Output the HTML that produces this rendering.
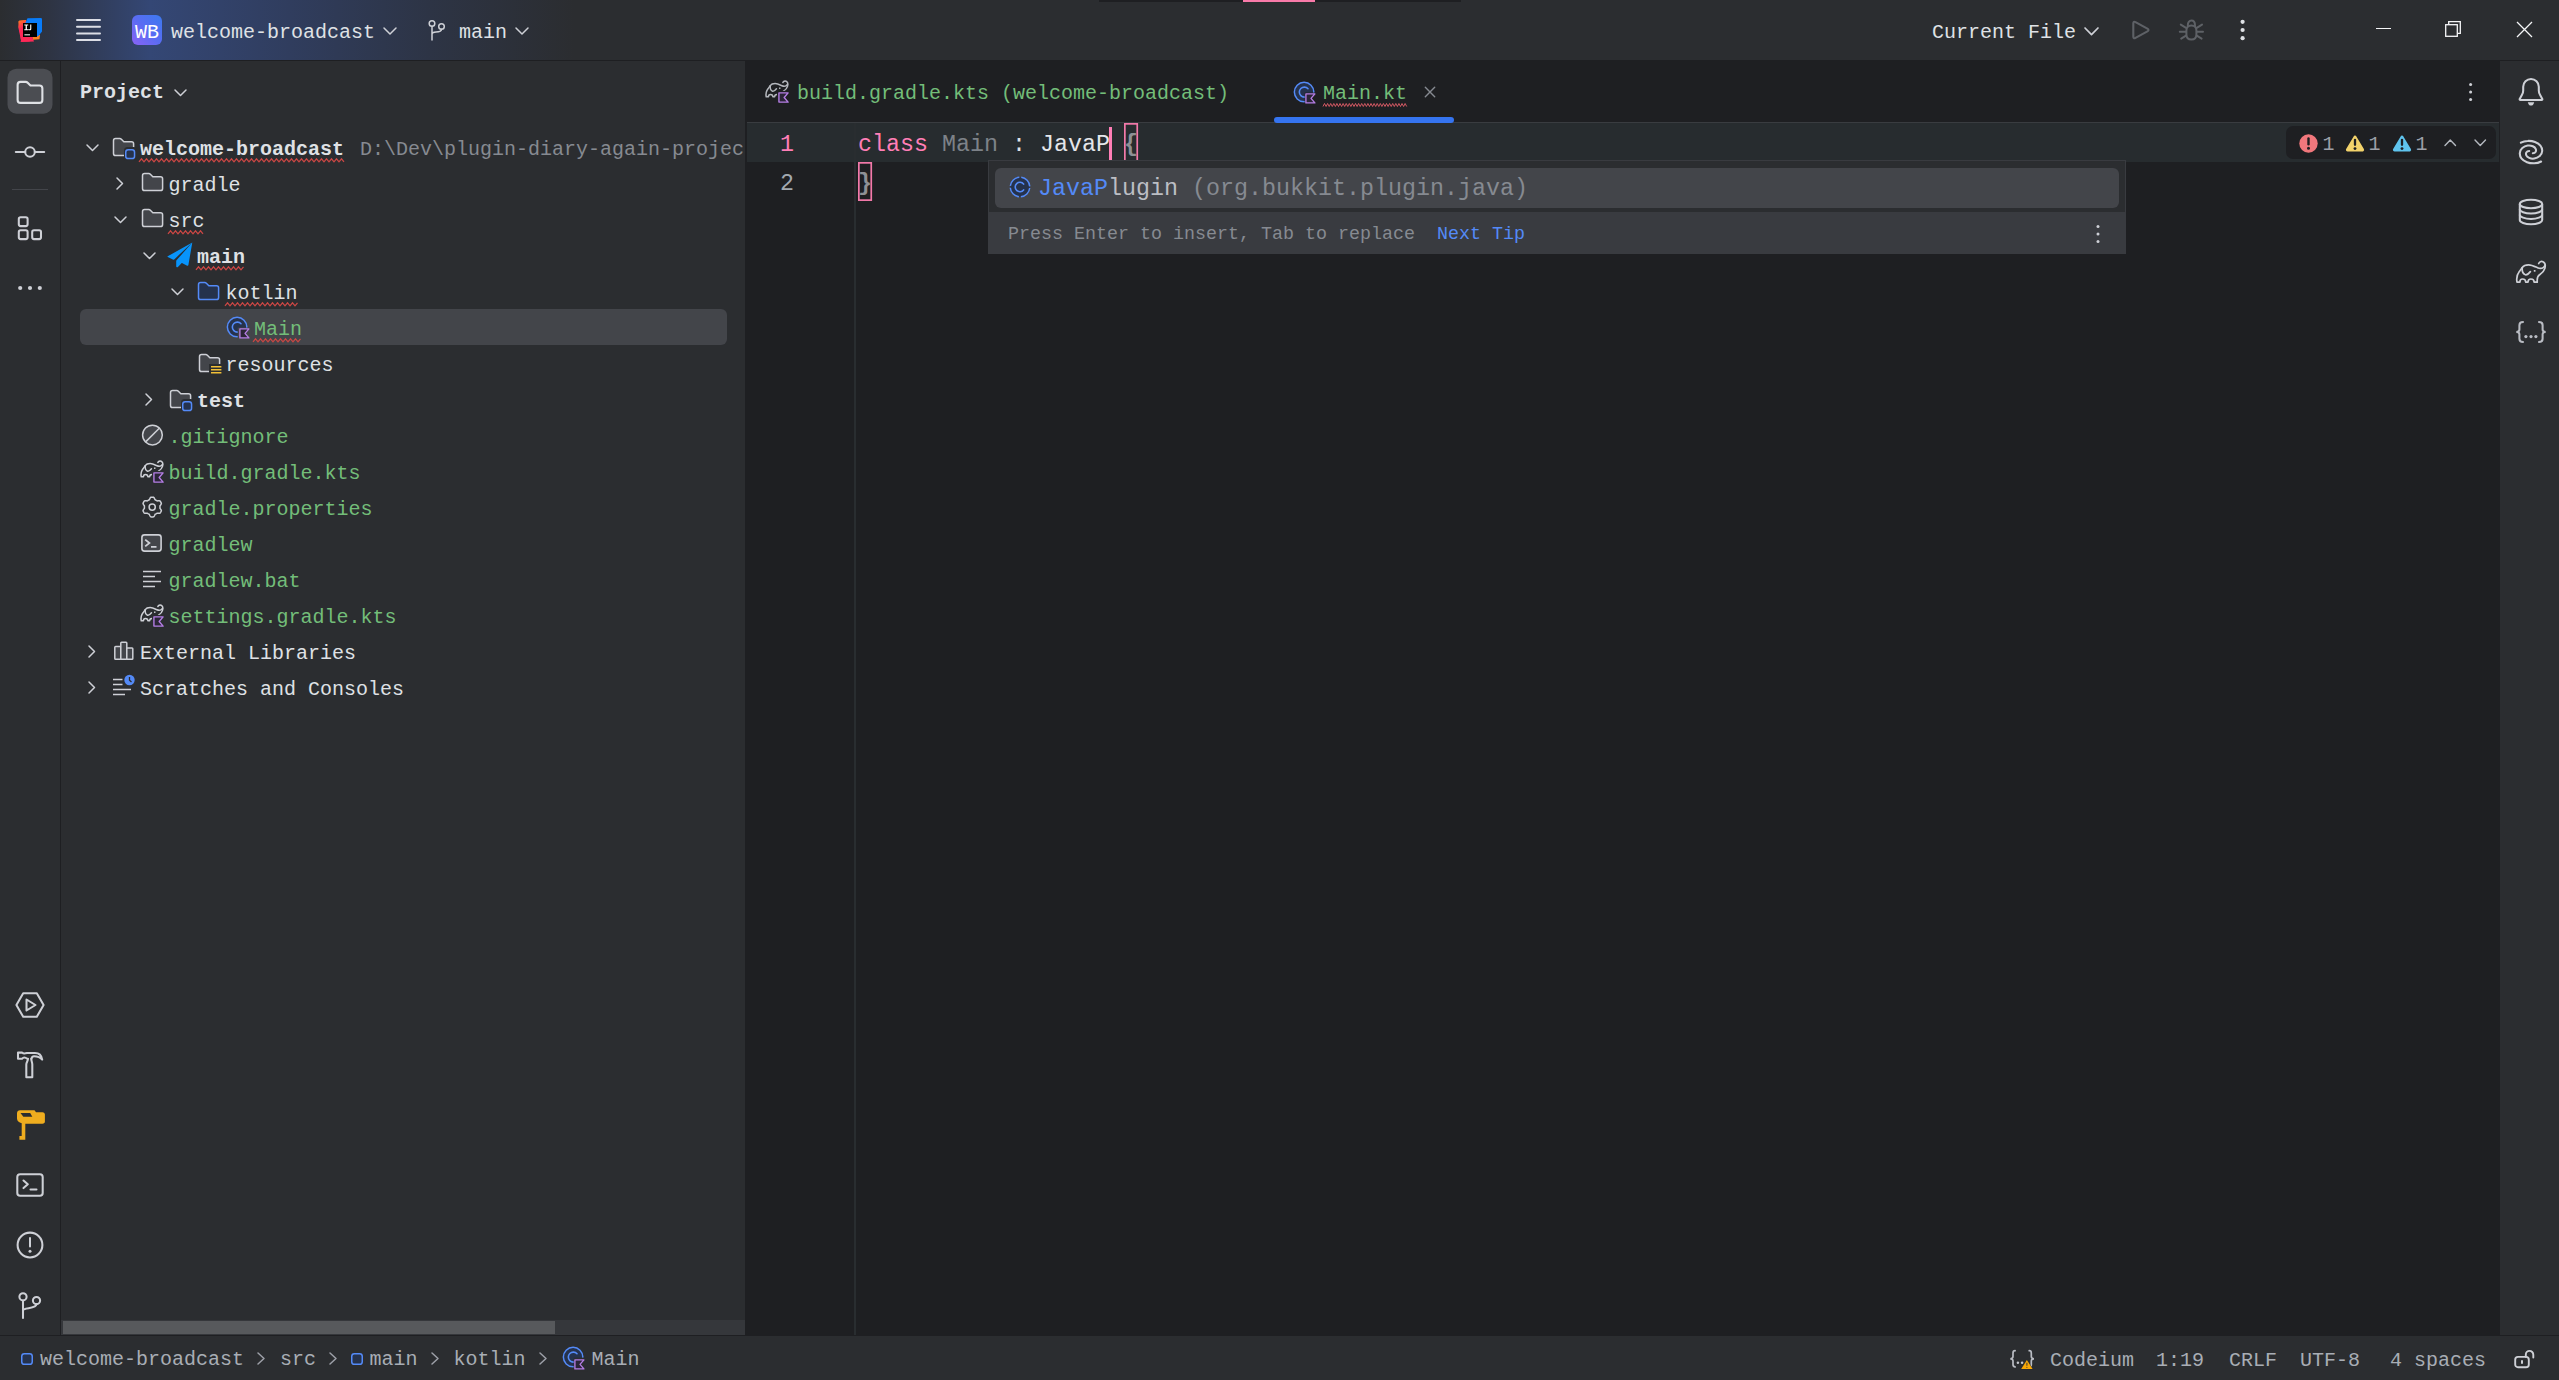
<!DOCTYPE html>
<html><head><meta charset="utf-8"><title>welcome-broadcast – Main.kt</title>
<style>
html,body{margin:0;padding:0;background:#1e1f22;}
body{width:2559px;height:1380px;position:relative;overflow:hidden;font-family:"Liberation Mono",monospace;}
.t{position:absolute;white-space:pre;font-family:"Liberation Mono",monospace;}
.i{position:absolute;overflow:visible;}
.b{position:absolute;}
</style></head><body>
<div class="b" style="left:0;top:0;width:2559px;height:60px;background:#2b2d30"></div>
<div class="b" style="left:0;top:0;width:600px;height:60px;background:linear-gradient(to right,#2b2d30 0px,#2e3443 50px,#344775 150px,#303d5e 290px,#2d3445 430px,#2b2d30 575px)"></div>
<div class="b" style="left:0;top:60px;width:2559px;height:1px;background:#1e1f22"></div>
<div class="b" style="left:0;top:61px;width:60px;height:1274px;background:#2b2d30"></div>
<div class="b" style="left:60px;top:61px;width:1px;height:1274px;background:#1e1f22"></div>
<div class="b" style="left:61px;top:61px;width:684px;height:1274px;background:#2b2d30"></div>
<div class="b" style="left:2500px;top:61px;width:59px;height:1274px;background:#2b2d30"></div>
<div class="b" style="left:0;top:1336px;width:2559px;height:44px;background:#2b2d30"></div>
<div class="b" style="left:80px;top:309px;width:647px;height:36px;border-radius:6px;background:#43454a"></div>
<div class="t " style="left:80px;top:77.66px;font-size:20px;line-height:30px;color:#dfe1e5;font-weight:bold;">Project</div>
<svg class="i" style="left:173.5px;top:89.25px;" width="13" height="7.5" viewBox="0 0 13 7.5"><polyline points="1,1 6.5,6.5 12,1" fill="none" stroke="#ced0d6" stroke-width="1.5" stroke-linecap="round" stroke-linejoin="round"/></svg>
<div class="t " style="left:140px;top:134.66px;font-size:20px;line-height:30px;color:#dfe1e5;font-weight:bold;">welcome-broadcast</div>
<svg class="i" style="left:85.5px;top:143.75px;" width="13" height="7.5" viewBox="0 0 13 7.5"><polyline points="1,1 6.5,6.5 12,1" fill="none" stroke="#ced0d6" stroke-width="1.5" stroke-linecap="round" stroke-linejoin="round"/></svg>
<svg class="i" style="left:139px;top:158px" width="205" height="5" viewBox="0 0 205 5"><polyline points="0.0,3.8 2.5,0.8 5.0,3.8 7.5,0.8 10.0,3.8 12.5,0.8 15.0,3.8 17.5,0.8 20.0,3.8 22.5,0.8 25.0,3.8 27.5,0.8 30.0,3.8 32.5,0.8 35.0,3.8 37.5,0.8 40.0,3.8 42.5,0.8 45.0,3.8 47.5,0.8 50.0,3.8 52.5,0.8 55.0,3.8 57.5,0.8 60.0,3.8 62.5,0.8 65.0,3.8 67.5,0.8 70.0,3.8 72.5,0.8 75.0,3.8 77.5,0.8 80.0,3.8 82.5,0.8 85.0,3.8 87.5,0.8 90.0,3.8 92.5,0.8 95.0,3.8 97.5,0.8 100.0,3.8 102.5,0.8 105.0,3.8 107.5,0.8 110.0,3.8 112.5,0.8 115.0,3.8 117.5,0.8 120.0,3.8 122.5,0.8 125.0,3.8 127.5,0.8 130.0,3.8 132.5,0.8 135.0,3.8 137.5,0.8 140.0,3.8 142.5,0.8 145.0,3.8 147.5,0.8 150.0,3.8 152.5,0.8 155.0,3.8 157.5,0.8 160.0,3.8 162.5,0.8 165.0,3.8 167.5,0.8 170.0,3.8 172.5,0.8 175.0,3.8 177.5,0.8 180.0,3.8 182.5,0.8 185.0,3.8 187.5,0.8 190.0,3.8 192.5,0.8 195.0,3.8 197.5,0.8 200.0,3.8 202.5,0.8 205.0,3.8" fill="none" stroke="#cb4744" stroke-width="1.25" stroke-linejoin="miter"/></svg>
<div class="b" style="left:360px;top:129px;width:385px;height:36px;overflow:hidden"><div class="t" style="left:0;top:5.66px;font-size:20px;line-height:30px;color:#868a91">D:\Dev\plugin-diary-again-project</div></div>
<div class="t " style="left:168.5px;top:170.66px;font-size:20px;line-height:30px;color:#dfe1e5;">gradle</div>
<svg class="i" style="left:116.25px;top:176.5px;" width="7.5" height="13" viewBox="0 0 7.5 13"><polyline points="1,1 6.5,6.5 1,12" fill="none" stroke="#ced0d6" stroke-width="1.5" stroke-linecap="round" stroke-linejoin="round"/></svg>
<div class="t " style="left:168.5px;top:206.66px;font-size:20px;line-height:30px;color:#dfe1e5;">src</div>
<svg class="i" style="left:114.0px;top:215.75px;" width="13" height="7.5" viewBox="0 0 13 7.5"><polyline points="1,1 6.5,6.5 12,1" fill="none" stroke="#ced0d6" stroke-width="1.5" stroke-linecap="round" stroke-linejoin="round"/></svg>
<svg class="i" style="left:167.5px;top:230px" width="37.0" height="5" viewBox="0 0 37.0 5"><polyline points="0.0,3.8 2.5,0.8 5.0,3.8 7.5,0.8 10.0,3.8 12.5,0.8 15.0,3.8 17.5,0.8 20.0,3.8 22.5,0.8 25.0,3.8 27.5,0.8 30.0,3.8 32.5,0.8 35.0,3.8" fill="none" stroke="#cb4744" stroke-width="1.25" stroke-linejoin="miter"/></svg>
<div class="t " style="left:197px;top:242.66px;font-size:20px;line-height:30px;color:#dfe1e5;font-weight:bold;">main</div>
<svg class="i" style="left:142.5px;top:251.75px;" width="13" height="7.5" viewBox="0 0 13 7.5"><polyline points="1,1 6.5,6.5 12,1" fill="none" stroke="#ced0d6" stroke-width="1.5" stroke-linecap="round" stroke-linejoin="round"/></svg>
<svg class="i" style="left:196px;top:266px" width="49" height="5" viewBox="0 0 49 5"><polyline points="0.0,3.8 2.5,0.8 5.0,3.8 7.5,0.8 10.0,3.8 12.5,0.8 15.0,3.8 17.5,0.8 20.0,3.8 22.5,0.8 25.0,3.8 27.5,0.8 30.0,3.8 32.5,0.8 35.0,3.8 37.5,0.8 40.0,3.8 42.5,0.8 45.0,3.8 47.5,0.8" fill="none" stroke="#cb4744" stroke-width="1.25" stroke-linejoin="miter"/></svg>
<div class="t " style="left:225.5px;top:278.66px;font-size:20px;line-height:30px;color:#dfe1e5;">kotlin</div>
<svg class="i" style="left:171.0px;top:287.75px;" width="13" height="7.5" viewBox="0 0 13 7.5"><polyline points="1,1 6.5,6.5 12,1" fill="none" stroke="#ced0d6" stroke-width="1.5" stroke-linecap="round" stroke-linejoin="round"/></svg>
<svg class="i" style="left:224.5px;top:302px" width="73.0" height="5" viewBox="0 0 73.0 5"><polyline points="0.0,3.8 2.5,0.8 5.0,3.8 7.5,0.8 10.0,3.8 12.5,0.8 15.0,3.8 17.5,0.8 20.0,3.8 22.5,0.8 25.0,3.8 27.5,0.8 30.0,3.8 32.5,0.8 35.0,3.8 37.5,0.8 40.0,3.8 42.5,0.8 45.0,3.8 47.5,0.8 50.0,3.8 52.5,0.8 55.0,3.8 57.5,0.8 60.0,3.8 62.5,0.8 65.0,3.8 67.5,0.8 70.0,3.8 72.5,0.8" fill="none" stroke="#cb4744" stroke-width="1.25" stroke-linejoin="miter"/></svg>
<div class="t " style="left:254px;top:314.66px;font-size:20px;line-height:30px;color:#73bd79;">Main</div>
<svg class="i" style="left:253px;top:338px" width="49" height="5" viewBox="0 0 49 5"><polyline points="0.0,3.8 2.5,0.8 5.0,3.8 7.5,0.8 10.0,3.8 12.5,0.8 15.0,3.8 17.5,0.8 20.0,3.8 22.5,0.8 25.0,3.8 27.5,0.8 30.0,3.8 32.5,0.8 35.0,3.8 37.5,0.8 40.0,3.8 42.5,0.8 45.0,3.8 47.5,0.8" fill="none" stroke="#cb4744" stroke-width="1.25" stroke-linejoin="miter"/></svg>
<div class="t " style="left:225.5px;top:350.66px;font-size:20px;line-height:30px;color:#dfe1e5;">resources</div>
<div class="t " style="left:197px;top:386.66px;font-size:20px;line-height:30px;color:#dfe1e5;font-weight:bold;">test</div>
<svg class="i" style="left:144.75px;top:392.5px;" width="7.5" height="13" viewBox="0 0 7.5 13"><polyline points="1,1 6.5,6.5 1,12" fill="none" stroke="#ced0d6" stroke-width="1.5" stroke-linecap="round" stroke-linejoin="round"/></svg>
<div class="t " style="left:168.5px;top:422.66px;font-size:20px;line-height:30px;color:#73bd79;">.gitignore</div>
<div class="t " style="left:168.5px;top:458.66px;font-size:20px;line-height:30px;color:#73bd79;">build.gradle.kts</div>
<div class="t " style="left:168.5px;top:494.66px;font-size:20px;line-height:30px;color:#73bd79;">gradle.properties</div>
<div class="t " style="left:168.5px;top:530.66px;font-size:20px;line-height:30px;color:#73bd79;">gradlew</div>
<div class="t " style="left:168.5px;top:566.66px;font-size:20px;line-height:30px;color:#73bd79;">gradlew.bat</div>
<div class="t " style="left:168.5px;top:602.66px;font-size:20px;line-height:30px;color:#73bd79;">settings.gradle.kts</div>
<div class="t " style="left:140px;top:638.66px;font-size:20px;line-height:30px;color:#dfe1e5;">External Libraries</div>
<svg class="i" style="left:87.75px;top:644.5px;" width="7.5" height="13" viewBox="0 0 7.5 13"><polyline points="1,1 6.5,6.5 1,12" fill="none" stroke="#ced0d6" stroke-width="1.5" stroke-linecap="round" stroke-linejoin="round"/></svg>
<div class="t " style="left:140px;top:674.66px;font-size:20px;line-height:30px;color:#dfe1e5;">Scratches and Consoles</div>
<svg class="i" style="left:87.75px;top:680.5px;" width="7.5" height="13" viewBox="0 0 7.5 13"><polyline points="1,1 6.5,6.5 1,12" fill="none" stroke="#ced0d6" stroke-width="1.5" stroke-linecap="round" stroke-linejoin="round"/></svg>
<svg class="i" style="left:140.5px;top:171px;" width="24" height="24" viewBox="0 0 16 16"><path d="M1 3.100C1 2.330 1.630 1.700 2.400 1.700H5.200c.400 0 .770.160 1.050.440L7.900 3.800h5.100c.770 0 1.400.630 1.400 1.400v6.400c0 .770-.630 1.400-1.400 1.400H2.400C1.630 13 1 12.370 1 11.600V3.100z" fill="#43454a" stroke="#ced0d6" stroke-width="1"/></svg>
<svg class="i" style="left:140.5px;top:207px;" width="24" height="24" viewBox="0 0 16 16"><path d="M1 3.100C1 2.330 1.630 1.700 2.400 1.700H5.200c.400 0 .770.160 1.050.440L7.900 3.800h5.100c.770 0 1.400.630 1.400 1.400v6.400c0 .770-.630 1.400-1.400 1.400H2.400C1.630 13 1 12.370 1 11.600V3.100z" fill="#43454a" stroke="#ced0d6" stroke-width="1"/></svg>
<svg class="i" style="left:196.8px;top:280.2px;" width="24" height="24" viewBox="0 0 16 16"><path d="M1 3.100C1 2.330 1.630 1.700 2.400 1.700H5.200c.400 0 .770.160 1.050.440L7.900 3.800h5.100c.770 0 1.400.630 1.400 1.400v6.400c0 .770-.630 1.400-1.400 1.400H2.400C1.630 13 1 12.370 1 11.600V3.100z" fill="#25324d" stroke="#548af7" stroke-width="1"/></svg>
<div class="b" style="left:61px;top:1320px;width:684px;height:15px;background:#35373b"></div>
<div class="b" style="left:63px;top:1321.300px;width:491.600px;height:13.200px;background:#57595c"></div>
<div class="b" style="left:1099px;top:0;width:362px;height:2px;background:#1e1f22"></div>
<div class="b" style="left:1243px;top:0;width:72px;height:2px;background:#f97aa9"></div>
<svg class="i" style="left:18px;top:18px;" width="24" height="24" viewBox="0 0 24 24">
<defs><linearGradient id="lg1" x1="0" y1="0" x2="0.3" y2="1"><stop offset="0" stop-color="#fc801d"/><stop offset="0.45" stop-color="#fe2857"/><stop offset="1" stop-color="#fe2857"/></linearGradient></defs>
<path d="M0.3 3.2 L7.5 2.2 L16 23.5 L3.2 24 Z" fill="url(#lg1)" transform="translate(0,0)"/>
<path d="M1.2 2.4 L8 2 L12 14 L3 22 L0.2 9 Z" fill="url(#lg1)"/>
<path d="M2.5 23.8 L11.5 23.6 L17 17 L8 10 Z" fill="#fe2857"/>
<path d="M14 13 L22 17 L21.5 21.3 L15 21.8 Z" fill="#fc801d"/>
<path d="M9.5 0.3 L22.8 0 Q24 0 24 1.2 L24 13.5 L20 18.5 L10 14 L7.5 4.5 Z" fill="#087cfa"/>
<rect x="5" y="5" width="14" height="14" fill="#000"/>
<rect x="6.4" y="16.2" width="5.6" height="1.2" fill="#fff" opacity="0.85"/>
<path d="M6.3 6.6h3.9v1h-1.3v3.6h1.3v1H6.3v-1h1.3V7.6H6.3z M12.2 6.6h1.1v4.1c0 1.1-.6 1.6-1.6 1.6-.7 0-1.1-.2-1.5-.6l.6-.8c.2.3.5.4.8.4.4 0 .6-.2.6-.8z" fill="#fff"/>
</svg>
<svg class="i" style="left:75px;top:18px;" width="28" height="24" viewBox="0 0 28 24"><line x1="2" y1="2" x2="25" y2="2" stroke="#dcdee6" stroke-width="2" stroke-linecap="round"/><line x1="2" y1="8.7" x2="25" y2="8.7" stroke="#dcdee6" stroke-width="2" stroke-linecap="round"/><line x1="2" y1="15.399999999999999" x2="25" y2="15.399999999999999" stroke="#dcdee6" stroke-width="2" stroke-linecap="round"/><line x1="2" y1="22.1" x2="25" y2="22.1" stroke="#dcdee6" stroke-width="2" stroke-linecap="round"/></svg>
<div class="b" style="left:132px;top:15px;width:30px;height:30px;border-radius:6px;background:linear-gradient(225deg,#3b7af0 0%,#5a6cf3 50%,#8a63f6 100%)"></div>
<div class="t " style="left:135px;top:17.66px;font-size:20px;line-height:30px;color:#ffffff;">WB</div>
<div class="t " style="left:171px;top:17.66px;font-size:20px;line-height:30px;color:#dfe1e5;">welcome-broadcast</div>
<svg class="i" style="left:383.0px;top:26.5px;" width="14" height="8" viewBox="0 0 14 8"><polyline points="1,1 7.0,7 13,1" fill="none" stroke="#ced0d6" stroke-width="1.5" stroke-linecap="round" stroke-linejoin="round"/></svg>
<svg class="i" style="left:426px;top:18px;" width="22" height="24" viewBox="0 0 22 24">
<circle cx="6" cy="5.5" r="2.8" fill="none" stroke="#ced0d6" stroke-width="1.5"/>
<circle cx="15.5" cy="8.5" r="2.8" fill="none" stroke="#ced0d6" stroke-width="1.5"/>
<path d="M6 8.3V22 M6 16.5c0 0 0-2.5 4-2.5s5.5-1 5.5-2.7" fill="none" stroke="#ced0d6" stroke-width="1.5" stroke-linecap="round"/>
</svg>
<div class="t " style="left:459px;top:17.66px;font-size:20px;line-height:30px;color:#dfe1e5;">main</div>
<svg class="i" style="left:515.0px;top:26.5px;" width="14" height="8" viewBox="0 0 14 8"><polyline points="1,1 7.0,7 13,1" fill="none" stroke="#ced0d6" stroke-width="1.5" stroke-linecap="round" stroke-linejoin="round"/></svg>
<div class="t " style="left:1932px;top:17.66px;font-size:20px;line-height:30px;color:#dfe1e5;">Current File</div>
<svg class="i" style="left:2083.5px;top:27.25px;" width="15" height="8.7" viewBox="0 0 15 8.7"><polyline points="1,1 7.5,7.7 14,1" fill="none" stroke="#ced0d6" stroke-width="1.7" stroke-linecap="round" stroke-linejoin="round"/></svg>
<svg class="i" style="left:2128px;top:16px;" width="28" height="28" viewBox="0 0 28 28"><path d="M5.300 7.600Q5.300 4.900 7.500 6.100L19.400 12.600Q21.600 14 19.400 15.400L7.500 21.900Q5.300 23.100 5.300 20.400Z" fill="none" stroke="#5e6166" stroke-width="2.100" stroke-linejoin="round"/></svg>
<svg class="i" style="left:2177px;top:16px;" width="28" height="28" viewBox="0 0 28 28">
<g fill="none" stroke="#5e6166" stroke-width="2" stroke-linecap="round">
<path d="M9.400 14.400C9.400 11.400 11.400 9.400 14.400 9.400S19.400 11.400 19.400 14.400V18.400C19.400 21.400 17.400 23.400 14.400 23.400S9.400 21.400 9.400 18.400Z"/>
<path d="M10.800 9.400C10.800 6.400 12.200 4.500 14.400 4.500S18 6.400 18 9.400"/>
<path d="M9 11.800L3.800 8.600M9 15.700H2.800M9 19.700L4.200 22.600M19.800 11.800L25 8.600M19.800 15.700H26M19.800 19.700L24.600 22.600"/>
</g></svg>
<svg class="i" style="left:2238px;top:17px;" width="8" height="26" viewBox="0 0 8 26"><circle cx="4.600" cy="4.8" r="2.100" fill="#dfe1e5"/><circle cx="4.600" cy="13" r="2.100" fill="#dfe1e5"/><circle cx="4.600" cy="21.2" r="2.100" fill="#dfe1e5"/></svg>
<div class="b" style="left:2376px;top:27.800px;width:15px;height:1.500px;background:#f5f6f8"></div>
<svg class="i" style="left:2445.4px;top:21.4px;" width="17" height="17" viewBox="0 0 17 17"><rect x="0.700" y="3.700" width="11.600" height="11.600" fill="none" stroke="#f5f6f8" stroke-width="1.300"/><path d="M3.700 3.500V0.700H15.300V12.300H12.500" fill="none" stroke="#f5f6f8" stroke-width="1.300"/></svg>
<svg class="i" style="left:2516px;top:21px;" width="17" height="17" viewBox="0 0 17 17"><path d="M1 1L16 16M16 1L1 16" stroke="#f5f6f8" stroke-width="1.300"/></svg>
<svg class="i" style="left:764.7px;top:79.3px;" width="24" height="24" viewBox="0 0 24 24"><g transform="translate(.46,-1.4) scale(.766)"><g fill="none" stroke="#b4b7bd" stroke-width="1.950" stroke-linecap="round" stroke-linejoin="round"><path d="M21.2 25.1H18.1C18.1 23.3 16.700 22 14.900 22C13.100 22 12 23.300 12 25.100H9.700C9.700 23.300 8.300 22 6.500 22C4.700 22 3.900 23.300 3.900 25.100H1C.300 21.500 1 17.600 3.300 14.600C4.600 12.900 5.600 11.700 6.200 10.500C7.500 8.600 10 7.800 12.600 7.800C15.600 7.800 18.500 9.300 21.500 10.700C23.500 11.600 25.600 11.700 27.200 10.600C27.900 10.100 28.400 9.500 28.700 8.800"/><path d="M22.7 6.500C23.300 4.900 25.200 3.900 26.900 4.700C29 5.700 29.600 8.600 28.800 11.400C28 14.200 25.900 16.200 23.600 17.800C21.900 19 21.200 20.800 21.200 23V25.100"/><path d="M6.2 10.800C6 13.500 7 17 9.300 17.800C11.300 18.400 13 16.300 14.400 14.600"/></g><rect x="17.700" y="12.900" width="1.900" height="1.900" fill="#b4b7bd"/></g><rect x="12" y="11.900" width="13" height="13" fill="#1e1f22"/></svg>
<svg class="i" style="left:777.9000000000001px;top:92.39999999999999px;" width="11.040000000000001" height="11.040000000000001" viewBox="0 0 12 12"><path d="M1 1H11L6.700 6L11 11H1Z" fill="#2b2537" stroke="#b57ee5" stroke-width="1.5" stroke-linejoin="round"/></svg>
<div class="t " style="left:797px;top:78.66px;font-size:20px;line-height:30px;color:#73bd79;">build.gradle.kts (welcome-broadcast)</div>
<svg class="i" style="left:1292.9px;top:79.8px;" width="26" height="26" viewBox="0 0 26 26">
<circle cx="11.100" cy="12.100" r="9.750" fill="#25324d" stroke="#548af7" stroke-width="1.500"/>
<path d="M15 8.700A5 5 0 1 0 15 15.500" fill="none" stroke="#548af7" stroke-width="1.600" stroke-linecap="round"/>
<rect x="11.700" y="12.600" width="13.700" height="13.700" fill="#1e1f22"/>
</svg>
<svg class="i" style="left:1305.4px;top:93.2px;" width="10.8" height="10.8" viewBox="0 0 12 12"><path d="M1 1H11L6.700 6L11 11H1Z" fill="#2b2537" stroke="#b57ee5" stroke-width="1.5" stroke-linejoin="round"/></svg>
<div class="t " style="left:1323px;top:78.66px;font-size:20px;line-height:30px;color:#73bd79;">Main.kt</div>
<svg class="i" style="left:1323px;top:102.6px" width="84" height="5" viewBox="0 0 84 5"><polyline points="0.0,3.5 1.5,0.5 3.1,3.5 4.6,0.5 6.2,3.5 7.7,0.5 9.3,3.5 10.8,0.5 12.4,3.5 13.9,0.5 15.5,3.5 17.0,0.5 18.6,3.5 20.1,0.5 21.7,3.5 23.2,0.5 24.8,3.5 26.3,0.5 27.9,3.5 29.4,0.5 31.0,3.5 32.5,0.5 34.1,3.5 35.6,0.5 37.2,3.5 38.7,0.5 40.3,3.5 41.8,0.5 43.4,3.5 44.9,0.5 46.5,3.5 48.0,0.5 49.6,3.5 51.1,0.5 52.7,3.5 54.2,0.5 55.8,3.5 57.3,0.5 58.9,3.5 60.4,0.5 62.0,3.5 63.5,0.5 65.1,3.5 66.6,0.5 68.2,3.5 69.7,0.5 71.3,3.5 72.8,0.5 74.4,3.5 75.9,0.5 77.5,3.5 79.0,0.5 80.6,3.5 82.1,0.5 83.7,3.5" fill="none" stroke="#f0626e" stroke-width="0.85" stroke-linejoin="miter"/></svg>
<svg class="i" style="left:1423px;top:85px;" width="14" height="14" viewBox="0 0 14 14"><path d="M2.300 2.300L11.700 11.700M11.700 2.300L2.300 11.700" stroke="#868a91" stroke-width="1.400" stroke-linecap="round"/></svg>
<div class="b" style="left:747px;top:122px;width:1752px;height:1px;background:#393c40"></div>
<svg class="i" style="left:2466px;top:80px;" width="8" height="24" viewBox="0 0 8 24"><circle cx="4.6" cy="4.5" r="1.5" fill="#ced0d6"/><circle cx="4.6" cy="12" r="1.5" fill="#ced0d6"/><circle cx="4.6" cy="19.5" r="1.5" fill="#ced0d6"/></svg>
<div class="b" style="left:747px;top:123px;width:1752px;height:39px;background:#272c2f"></div>
<div class="b" style="left:854px;top:123px;width:2.200px;height:1212px;background:#292d30"></div>
<div class="b" style="left:1273.5px;top:117px;width:180.500px;height:6px;border-radius:3px;background:#3574f0"></div>
<div class="t" style="left:780px;top:126.27px;font-size:23.333px;line-height:39px;color:#ff7eb6;">1</div>
<div class="t" style="left:780px;top:165.27px;font-size:23.333px;line-height:39px;color:#a2a9b0;">2</div>
<div class="t" style="left:858px;top:126.27px;font-size:23.333px;line-height:39px;color:#ff7eb6;">class</div>
<div class="t" style="left:942px;top:126.27px;font-size:23.333px;line-height:39px;color:#7d8288;">Main</div>
<div class="t" style="left:1012px;top:126.27px;font-size:23.333px;line-height:39px;color:#dde1e6;">:</div>
<div class="t" style="left:1040px;top:126.27px;font-size:23.333px;line-height:39px;color:#e4e6ea;">JavaP</div>
<div class="t" style="left:1124px;top:126.27px;font-size:23.333px;line-height:39px;color:#8e9195;font-weight:bold;">{</div>
<div class="t" style="left:858px;top:165.27px;font-size:23.333px;line-height:39px;color:#8e9195;font-weight:bold;">}</div>
<div class="b" style="left:1109px;top:127px;width:3.300px;height:33px;background:#ff7eb6"></div>
<svg class="i" style="left:1124px;top:123px;" width="14.1" height="39" viewBox="0 0 14.100 39"><rect x="0.850" y="0.850" width="12.400" height="37.300" fill="none" stroke="#f379aa" stroke-width="1.700"/></svg>
<svg class="i" style="left:858px;top:162px;" width="14.1" height="39" viewBox="0 0 14.100 39"><rect x="0.850" y="0.850" width="12.400" height="37.300" fill="none" stroke="#f379aa" stroke-width="1.700"/></svg>
<div class="b" style="left:2286px;top:126px;width:210px;height:33px;border-radius:7px;background:#1e1f22"></div>
<svg class="i" style="left:2299px;top:133.6px;" width="19" height="19" viewBox="0 0 19 19"><circle cx="9.500" cy="9.500" r="9.200" fill="#f1777c"/><path d="M9.500 4.400V10.300" stroke="#1e1f22" stroke-width="2.400" stroke-linecap="round"/><circle cx="9.500" cy="14.200" r="1.500" fill="#1e1f22"/></svg>
<div class="t " style="left:2322.5px;top:129.96px;font-size:20px;line-height:30px;color:#9da0a8;">1</div>
<svg class="i" style="left:2345px;top:133.5px;" width="20" height="19" viewBox="0 0 20 19"><path d="M10 3.200L17.500 15.800H2.500Z" fill="#f3d36b" stroke="#f3d36b" stroke-width="3.200" stroke-linejoin="round"/><path d="M10 5.800V10.800" stroke="#1e1f22" stroke-width="2.300" stroke-linecap="round"/><circle cx="10" cy="14.600" r="1.450" fill="#1e1f22"/></svg>
<div class="t " style="left:2368.5px;top:129.96px;font-size:20px;line-height:30px;color:#9da0a8;">1</div>
<svg class="i" style="left:2392px;top:133.5px;" width="20" height="19" viewBox="0 0 20 19"><path d="M10 3.200L17.500 15.800H2.500Z" fill="#5fc4ee" stroke="#5fc4ee" stroke-width="3.200" stroke-linejoin="round"/><path d="M10 5.800V10.800" stroke="#1e1f22" stroke-width="2.300" stroke-linecap="round"/><circle cx="10" cy="14.600" r="1.450" fill="#1e1f22"/></svg>
<div class="t " style="left:2415.5px;top:129.96px;font-size:20px;line-height:30px;color:#9da0a8;">1</div>
<svg class="i" style="left:2443.75px;top:139.05px;" width="12.5" height="7.5" viewBox="0 0 12.5 7.5"><polyline points="1,6.5 6.25,1 11.5,6.5" fill="none" stroke="#b4b8bf" stroke-width="1.4" stroke-linecap="round" stroke-linejoin="round"/></svg>
<svg class="i" style="left:2474.25px;top:139.45px;" width="12.5" height="7.5" viewBox="0 0 12.5 7.5"><polyline points="1,1 6.25,6.5 11.5,1" fill="none" stroke="#b4b8bf" stroke-width="1.4" stroke-linecap="round" stroke-linejoin="round"/></svg>
<div class="b" style="left:988px;top:160px;width:1138px;height:94px;background:#2b2d30;box-shadow:0 0 0 1px #393b40 inset"></div>
<div class="b" style="left:995.400px;top:167.700px;width:1123.600px;height:40.400px;border-radius:6px;background:#43454a"></div>
<div class="b" style="left:989px;top:212px;width:1136px;height:41px;background:#393b40"></div>
<svg class="i" style="left:1009px;top:176px;" width="22" height="22" viewBox="0 0 22 22"><circle cx="11" cy="11" r="9.750" fill="#25324d"/><circle cx="11" cy="11" r="9.750" fill="none" stroke="#548af7" stroke-width="1.500" stroke-dasharray="13.300 2.015" stroke-dashoffset="-1"/><path d="M14.600 8.100A4.700 4.700 0 1 0 14.600 13.900" fill="none" stroke="#548af7" stroke-width="1.600" stroke-linecap="round"/></svg>
<div class="t" style="left:1038px;top:170.27px;font-size:23.333px;line-height:39px;color:#548af7;">JavaP</div>
<div class="t" style="left:1108px;top:170.27px;font-size:23.333px;line-height:39px;color:#bcbec4;">lugin</div>
<div class="t" style="left:1192px;top:170.27px;font-size:23.333px;line-height:39px;color:#868a91;">(org.bukkit.plugin.java)</div>
<div class="t" style="left:1008px;top:220.10px;font-size:18.333px;line-height:30px;color:#868a91">Press Enter to insert, Tab to replace</div>
<div class="t" style="left:1437px;top:220.10px;font-size:18.333px;line-height:30px;color:#548af7">Next Tip</div>
<svg class="i" style="left:2094px;top:222px;" width="8" height="26" viewBox="0 0 8 26"><circle cx="4" cy="4.5" r="1.5" fill="#ced0d6"/><circle cx="4" cy="12" r="1.5" fill="#ced0d6"/><circle cx="4" cy="19.5" r="1.5" fill="#ced0d6"/></svg>
<svg class="i" style="left:0px;top:61px;" width="60" height="60" viewBox="0 0 60 60"><rect x="7.500" y="7.700" width="45" height="45" rx="9" fill="#4b4d52"/></svg>
<svg class="i" style="left:15px;top:76.5px;" width="30" height="30" viewBox="0 0 20 20"><path d="M1.75 5.2C1.75 4.100 2.600 3.250 3.700 3.250H7.100C7.600 3.250 8.100 3.450 8.450 3.800L10.300 5.650H16.300C17.400 5.650 18.250 6.500 18.250 7.600V15.300C18.250 16.400 17.400 17.250 16.300 17.250H3.700C2.600 17.250 1.750 16.400 1.750 15.300Z" fill="none" stroke="#dfe1e5" stroke-width="1.4"/></svg>
<svg class="i" style="left:15px;top:137px;" width="30" height="30" viewBox="0 0 30 30"><circle cx="15" cy="15" r="4.800" fill="none" stroke="#ced0d6" stroke-width="2.05"/><path d="M0.8 15H10.2M19.8 15H29.2" stroke="#ced0d6" stroke-width="2.05" stroke-linecap="round"/></svg>
<div class="b" style="left:12px;top:189px;width:36px;height:1px;background:#43454a"></div>
<svg class="i" style="left:15px;top:212.7px;" width="30" height="30" viewBox="0 0 30 30"><g fill="none" stroke="#ced0d6" stroke-width="2.05"><rect x="3.800" y="4.300" width="8.800" height="8.800" rx="1.800"/><rect x="3.800" y="17.300" width="8.800" height="8.800" rx="1.800"/><rect x="17.200" y="17.300" width="8.800" height="8.800" rx="1.800"/></g></svg>
<svg class="i" style="left:15px;top:280px;" width="30" height="16" viewBox="0 0 30 16"><circle cx="5.2" cy="8" r="2.100" fill="#ced0d6"/><circle cx="15" cy="8" r="2.100" fill="#ced0d6"/><circle cx="24.8" cy="8" r="2.100" fill="#ced0d6"/></svg>
<svg class="i" style="left:14px;top:990px;" width="32" height="30" viewBox="0 0 32 30"><path d="M9.200 3.200H22.800L29.600 15L22.800 26.800H9.200L2.400 15Z" fill="none" stroke="#ced0d6" stroke-width="2.05" stroke-linejoin="round"/><path d="M12.500 9.500L21.500 15L12.500 20.500Z" fill="none" stroke="#ced0d6" stroke-width="2.050" stroke-linejoin="round"/></svg>
<svg class="i" style="left:15px;top:1050px;" width="30" height="30" viewBox="0 0 30 30"><g fill="none" stroke="#ced0d6" stroke-width="2.050" stroke-linejoin="round" stroke-linecap="round"><path d="M12.300 8.800C10.400 7.300 8.200 7.400 7 8.700H3V2.600H7.200C8.200 3.800 10 3.600 12 3H20C24 3 26.600 5.800 27.200 9.600C25 6.900 22.500 6.200 19 6.200C17.500 6.200 16.800 7.200 16.400 8.700"/><path d="M13 8.800C13 11 11.300 12.500 11.300 14.500V27.300H17.300V14.500C17.300 12.500 16.300 11 16.300 8.800"/></g></svg>
<svg class="i" style="left:15px;top:1108px;" width="32" height="34" viewBox="0 0 32 34"><path d="M5 2.200H19.500L21 4.200H27.500C29 4.200 29.900 5.200 29.900 6.500V13.500C29.900 14.800 29 15.700 27.500 15.700H10.300V31.700H4.400V28H6.700V15.200C4 14.500 2 13 2 10.500V5.200C2 3.500 3.300 2.200 5 2.200Z" fill="#efad1f"/><path d="M5.500 5H15.200L17.300 8.800H8.300Z" fill="#2b2d30"/></svg>
<svg class="i" style="left:15px;top:1170px;" width="30" height="30" viewBox="0 0 30 30"><rect x="2.300" y="4.300" width="25.400" height="21.400" rx="2.800" fill="none" stroke="#ced0d6" stroke-width="2.050"/><path d="M8.500 10.500L12.800 14.300L8.500 18.100M15.500 19.500H21.500" fill="none" stroke="#ced0d6" stroke-width="2.050" stroke-linecap="round" stroke-linejoin="round"/></svg>
<svg class="i" style="left:15px;top:1230px;" width="30" height="30" viewBox="0 0 30 30"><circle cx="15" cy="15" r="12.400" fill="none" stroke="#ced0d6" stroke-width="2.050"/><path d="M15 8V16.500" stroke="#ced0d6" stroke-width="2" stroke-linecap="round"/><circle cx="15" cy="21.200" r="1.500" fill="#ced0d6"/></svg>
<svg class="i" style="left:15px;top:1290px;" width="30" height="30" viewBox="0 0 30 30"><g fill="none" stroke="#ced0d6" stroke-width="2.050" stroke-linecap="round"><circle cx="8" cy="6.800" r="3.600"/><circle cx="21.500" cy="10.500" r="3.600"/><path d="M8 10.400V28M8 20.500C8 17 21.500 19.500 21.500 14.100"/></g></svg>
<svg class="i" style="left:2516px;top:77px;" width="30" height="30" viewBox="0 0 30 30"><path d="M7.200 9.750A7.800 7.800 0 0 1 22.800 9.750V13.500C22.800 15 23.200 16.500 24 17.800L26.300 22C26.500 22.500 26.200 23 25.700 23H4.300C3.800 23 3.500 22.500 3.700 22L6 17.800C6.800 16.500 7.200 15 7.200 13.500Z" fill="none" stroke="#ced0d6" stroke-width="2.050" stroke-linejoin="round"/><path d="M11.800 25.200H18.200C17.800 27.200 16.600 28.600 15 28.600C13.400 28.600 12.200 27.200 11.800 25.200Z" fill="#ced0d6"/></svg>
<svg class="i" style="left:2516px;top:137px;" width="30" height="30" viewBox="0 0 30 30"><g fill="none" stroke="#ced0d6" stroke-width="2.050" stroke-linecap="round"><path d="M4.9 5.700C7 4.500 9.500 3.900 11.700 3.900C14.500 3.800 17 4.200 19 5C21.500 6 23.300 7.200 24.400 8.600C25.700 10.200 26.300 12 26.200 14C26.100 16 25.200 17.800 23.700 19.100C22.200 20.400 20.300 21.300 18.300 21.600C16.500 21.900 14.700 21.600 13.200 20.900C11.900 20.300 10.800 19.500 10.300 18.400C9.900 17.400 9.800 16.400 10.300 15.500C10.900 14.500 12 14 13.200 14"/><path d="M4.9 5.700C7 4.500 9.500 3.900 11.700 3.900C14.500 3.800 17 4.200 19 5C21.500 6 23.300 7.200 24.400 8.600C25.700 10.200 26.300 12 26.200 14C26.100 16 25.200 17.800 23.700 19.100C22.200 20.400 20.300 21.300 18.300 21.600C16.500 21.900 14.700 21.600 13.200 20.900C11.900 20.300 10.800 19.500 10.300 18.400C9.900 17.400 9.800 16.400 10.300 15.500C10.900 14.500 12 14 13.200 14" transform="rotate(180 15 15.100)"/></g></svg>
<svg class="i" style="left:2516px;top:197px;" width="30" height="30" viewBox="0 0 30 30"><g fill="none" stroke="#ced0d6" stroke-width="2.050"><ellipse cx="15" cy="7" rx="11.200" ry="4.200"/><path d="M3.800 7V23C3.800 25.300 8.800 27.200 15 27.200S26.200 25.300 26.200 23V7"/><path d="M3.800 12.300C3.800 14.600 8.800 16.500 15 16.500S26.200 14.600 26.200 12.300"/><path d="M3.800 17.700C3.800 20 8.800 21.900 15 21.900S26.200 20 26.200 17.700"/></g></svg>
<svg class="i" style="left:2516px;top:257px;" width="30" height="30" viewBox="0 0 30 30"><g fill="none" stroke="#ced0d6" stroke-width="1.700" stroke-linecap="round" stroke-linejoin="round"><path d="M21.2 25.1H18.1C18.1 23.3 16.700 22 14.900 22C13.100 22 12 23.300 12 25.100H9.700C9.700 23.300 8.300 22 6.500 22C4.700 22 3.900 23.300 3.900 25.100H1C.300 21.500 1 17.600 3.300 14.600C4.600 12.900 5.600 11.700 6.200 10.500C7.500 8.600 10 7.800 12.600 7.800C15.600 7.800 18.500 9.300 21.500 10.700C23.500 11.600 25.600 11.700 27.200 10.600C27.900 10.100 28.400 9.500 28.700 8.800"/><path d="M22.7 6.500C23.300 4.900 25.200 3.900 26.900 4.700C29 5.700 29.600 8.600 28.800 11.400C28 14.200 25.900 16.200 23.600 17.800C21.900 19 21.200 20.800 21.200 23V25.100"/><path d="M6.2 10.800C6 13.500 7 17 9.300 17.800C11.300 18.400 13 16.300 14.400 14.600"/></g><rect x="17.800" y="13" width="1.700" height="1.700" fill="#ced0d6"/></svg>
<svg class="i" style="left:2506px;top:310px;" width="50" height="50" viewBox="0 0 50 50"><g fill="none" stroke="#b9bcc3" stroke-width="2.050" stroke-linecap="round"><path d="M17 12C14.500 12 13.400 13.200 13.400 15.200V19.500C13.400 21 12.500 21.900 10.300 21.900C12.500 21.900 13.400 22.800 13.400 24.300V28.700C13.400 30.700 14.500 31.900 17 31.900"/><path d="M33 12C35.500 12 36.600 13.200 36.600 15.200V19.500C36.600 21 37.500 21.900 39.700 21.900C37.500 21.900 36.600 22.800 36.600 24.300V28.700C36.600 30.700 35.500 31.900 33 31.900"/></g><circle cx="19.900" cy="26.600" r="1.600" fill="#b9bcc3"/><circle cx="25" cy="26.600" r="1.600" fill="#b9bcc3"/><circle cx="29.900" cy="26.600" r="1.600" fill="#b9bcc3"/></svg>
<svg class="i" style="left:21px;top:1353px;" width="12" height="12" viewBox="0 0 12 12"><rect x="0.750" y="0.750" width="10.5" height="10.5" rx="2.600" fill="#25324d" stroke="#548af7" stroke-width="1.500"/></svg>
<div class="t " style="left:40px;top:1345.16px;font-size:20px;line-height:30px;color:#a8adb5;">welcome-broadcast</div>
<svg class="i" style="left:256.5px;top:1352.0px;" width="8" height="13" viewBox="0 0 8 13"><polyline points="1,1 7,6.5 1,12" fill="none" stroke="#9da0a8" stroke-width="1.5" stroke-linecap="round" stroke-linejoin="round"/></svg>
<div class="t " style="left:280px;top:1345.16px;font-size:20px;line-height:30px;color:#a8adb5;">src</div>
<svg class="i" style="left:328.5px;top:1352.0px;" width="8" height="13" viewBox="0 0 8 13"><polyline points="1,1 7,6.5 1,12" fill="none" stroke="#9da0a8" stroke-width="1.5" stroke-linecap="round" stroke-linejoin="round"/></svg>
<svg class="i" style="left:351px;top:1353px;" width="12" height="12" viewBox="0 0 12 12"><rect x="0.750" y="0.750" width="10.5" height="10.5" rx="2.600" fill="#25324d" stroke="#548af7" stroke-width="1.500"/></svg>
<div class="t " style="left:369.5px;top:1345.16px;font-size:20px;line-height:30px;color:#a8adb5;">main</div>
<svg class="i" style="left:430.5px;top:1352.0px;" width="8" height="13" viewBox="0 0 8 13"><polyline points="1,1 7,6.5 1,12" fill="none" stroke="#9da0a8" stroke-width="1.5" stroke-linecap="round" stroke-linejoin="round"/></svg>
<div class="t " style="left:453.5px;top:1345.16px;font-size:20px;line-height:30px;color:#a8adb5;">kotlin</div>
<svg class="i" style="left:539.0px;top:1352.0px;" width="8" height="13" viewBox="0 0 8 13"><polyline points="1,1 7,6.5 1,12" fill="none" stroke="#9da0a8" stroke-width="1.5" stroke-linecap="round" stroke-linejoin="round"/></svg>
<svg class="i" style="left:561.9px;top:1345.4px;" width="26" height="26" viewBox="0 0 26 26">
<circle cx="11.100" cy="12.100" r="9.750" fill="#25324d" stroke="#548af7" stroke-width="1.500"/>
<path d="M15 8.700A5 5 0 1 0 15 15.500" fill="none" stroke="#548af7" stroke-width="1.600" stroke-linecap="round"/>
<rect x="11.700" y="12.600" width="13.700" height="13.700" fill="#2b2d30"/>
</svg>
<svg class="i" style="left:574.4px;top:1358.8000000000002px;" width="10.8" height="10.8" viewBox="0 0 12 12"><path d="M1 1H11L6.700 6L11 11H1Z" fill="#2b2537" stroke="#b57ee5" stroke-width="1.5" stroke-linejoin="round"/></svg>
<div class="t " style="left:591.5px;top:1345.16px;font-size:20px;line-height:30px;color:#a8adb5;">Main</div>
<svg class="i" style="left:2002px;top:1340px;" width="40" height="36" viewBox="0 0 40 36"><g fill="none" stroke="#b9bcc3" stroke-width="1.700" stroke-linecap="round"><path d="M13.100 10.700C11.600 10.700 11 11.600 11 13V16.600C11 18 10.200 18.800 8.300 18.800C10.200 18.800 11 19.600 11 21V24.600C11 26 11.600 26.900 13.100 26.900"/><path d="M27.200 10.700C28.700 10.700 29.300 11.600 29.300 13V16.600C29.300 18 30.100 18.800 32 18.800C30.100 18.800 29.300 19.600 29.300 21V24.600C29.300 26 28.700 26.900 27.200 26.900"/></g><circle cx="15.900" cy="22.700" r="1.250" fill="#c4c7cd"/><circle cx="20.100" cy="22.700" r="1.250" fill="#c4c7cd"/><path d="M24.900 19.300L31.200 29.200H18.600Z" fill="#2b2d30"/><path d="M24.900 20L30.600 28.900H19.200Z" fill="#f9a806"/><path d="M24.900 22.800V25.800" stroke="#5a4a2a" stroke-width="1.200"/><circle cx="24.900" cy="27.300" r=".650" fill="#5a4a2a"/></svg>
<div class="t " style="left:2050px;top:1345.66px;font-size:20px;line-height:30px;color:#a8adb5;">Codeium</div>
<div class="t " style="left:2156px;top:1345.66px;font-size:20px;line-height:30px;color:#a8adb5;">1:19</div>
<div class="t " style="left:2229px;top:1345.66px;font-size:20px;line-height:30px;color:#a8adb5;">CRLF</div>
<div class="t " style="left:2300px;top:1345.66px;font-size:20px;line-height:30px;color:#a8adb5;">UTF-8</div>
<div class="t " style="left:2390px;top:1345.66px;font-size:20px;line-height:30px;color:#a8adb5;">4 spaces</div>
<svg class="i" style="left:2512px;top:1347px;" width="24" height="24" viewBox="0 0 24 24"><g fill="none" stroke="#ced0d6" stroke-width="1.900" stroke-linecap="round"><rect x="3.200" y="9.900" width="13.600" height="10.300" rx="2.800"/><path d="M13.800 9.900V7.650A3.750 3.750 0 0 1 21.300 7.650V10.500"/><path d="M10 13.200V16.800" stroke-width="2" stroke-linecap="butt"/></g></svg>
<svg class="i" style="left:112px;top:136.35px;" width="24" height="24" viewBox="0 0 16 16"><path d="M1 3.100C1 2.330 1.630 1.700 2.400 1.700H5.200c.400 0 .770.160 1.050.440L7.900 3.800h5.100c.770 0 1.400.630 1.400 1.400v6.400c0 .770-.630 1.400-1.400 1.400H2.400C1.630 13 1 12.370 1 11.600V3.100z" fill="#43454a" stroke="#ced0d6" stroke-width="1"/></svg>
<div class="b" style="left:123.5px;top:147.3px;width:13.500px;height:13.500px;background:#2b2d30;border-radius:3.500px"></div>
<svg class="i" style="left:124.7px;top:148.7px;" width="10.3" height="10.3" viewBox="0 0 10.300 10.300"><rect x="0.750" y="0.750" width="8.800" height="8.800" rx="2.400" fill="#25324d" stroke="#548af7" stroke-width="1.500"/></svg>
<svg class="i" style="left:169px;top:388.35px;" width="24" height="24" viewBox="0 0 16 16"><path d="M1 3.100C1 2.330 1.630 1.700 2.400 1.700H5.200c.400 0 .770.160 1.050.440L7.900 3.800h5.100c.770 0 1.400.630 1.400 1.400v6.400c0 .770-.630 1.400-1.400 1.400H2.400C1.630 13 1 12.370 1 11.600V3.100z" fill="#43454a" stroke="#ced0d6" stroke-width="1"/></svg>
<div class="b" style="left:180.5px;top:399.3px;width:13.500px;height:13.500px;background:#2b2d30;border-radius:3.500px"></div>
<svg class="i" style="left:181.7px;top:400.7px;" width="10.3" height="10.3" viewBox="0 0 10.300 10.300"><rect x="0.750" y="0.750" width="8.800" height="8.800" rx="2.400" fill="#25324d" stroke="#548af7" stroke-width="1.500"/></svg>
<svg class="i" style="left:160px;top:236px;" width="40" height="38" viewBox="0 0 40 38"><path d="M32.300 6.400L7.700 20.300C7.400 20.500 7.400 20.900 7.800 21.100L12.800 23.600C13.300 23.800 13.800 23.700 14.200 23.400Z M32.300 6.400L16.500 24.300C16.300 24.600 16.200 24.900 16.200 25.200V30.300C16.200 31.200 17.300 31.600 17.900 30.900L21.300 27.400C21.600 27.100 22 27 22.400 27.200L27.200 29.700C27.700 30 28.300 29.700 28.400 29.100Z" fill="#0894fb"/></svg>
<svg class="i" style="left:226px;top:315px;" width="26" height="26" viewBox="0 0 26 26">
<circle cx="11.100" cy="12.100" r="9.750" fill="#26324c" stroke="#548af7" stroke-width="1.500"/>
<path d="M15 8.700A5 5 0 1 0 15 15.500" fill="none" stroke="#548af7" stroke-width="1.600" stroke-linecap="round"/>
<rect x="11.700" y="12.600" width="13.700" height="13.700" fill="#43454a"/>
</svg>
<svg class="i" style="left:238.5px;top:328.4px;" width="10.8" height="10.8" viewBox="0 0 12 12"><path d="M1 1H11L6.700 6L11 11H1Z" fill="#2b2537" stroke="#b57ee5" stroke-width="1.5" stroke-linejoin="round"/></svg>
<svg class="i" style="left:197.5px;top:352.35px;" width="24" height="24" viewBox="0 0 16 16"><path d="M1 3.100C1 2.330 1.630 1.700 2.400 1.700H5.200c.400 0 .770.160 1.050.440L7.900 3.800h5.100c.770 0 1.400.630 1.400 1.400v6.400c0 .770-.630 1.400-1.400 1.400H2.400C1.630 13 1 12.370 1 11.600V3.100z" fill="#43454a" stroke="#ced0d6" stroke-width="1"/></svg>
<div class="b" style="left:209.0px;top:364.3px;width:13.500px;height:12px;background:#2b2d30"></div>
<svg class="i" style="left:210.5px;top:365px;" width="12" height="10" viewBox="0 0 12 10"><path d="M0 1.800H10.400M0 4.800H10.400M0 7.800H10.400" stroke="#f2c037" stroke-width="1.550"/></svg>
<svg class="i" style="left:140.5px;top:423px;" width="24" height="24" viewBox="0 0 24 24"><circle cx="11.450" cy="12.050" r="9.850" fill="#43454a" stroke="#ced0d6" stroke-width="1.500"/><path d="M4.600 18.900L18.300 5.200" stroke="#ced0d6" stroke-width="1.500"/></svg>
<svg class="i" style="left:140.0px;top:459px;" width="24" height="24" viewBox="0 0 24 24"><g transform="translate(.46,-1.4) scale(.766)"><g fill="none" stroke="#ced0d6" stroke-width="1.950" stroke-linecap="round" stroke-linejoin="round"><path d="M21.2 25.1H18.1C18.1 23.3 16.700 22 14.900 22C13.100 22 12 23.300 12 25.100H9.700C9.700 23.300 8.300 22 6.500 22C4.700 22 3.900 23.300 3.900 25.100H1C.300 21.500 1 17.600 3.300 14.600C4.600 12.900 5.600 11.700 6.200 10.500C7.500 8.600 10 7.800 12.600 7.800C15.600 7.800 18.500 9.300 21.500 10.700C23.500 11.600 25.600 11.700 27.200 10.600C27.900 10.100 28.400 9.500 28.700 8.800"/><path d="M22.7 6.500C23.300 4.900 25.200 3.900 26.900 4.700C29 5.700 29.600 8.600 28.800 11.400C28 14.200 25.900 16.200 23.600 17.800C21.900 19 21.200 20.800 21.200 23V25.100"/><path d="M6.2 10.800C6 13.500 7 17 9.300 17.800C11.300 18.400 13 16.300 14.400 14.600"/></g><rect x="17.700" y="12.900" width="1.900" height="1.900" fill="#ced0d6"/></g><rect x="12" y="11.900" width="13" height="13" fill="#2b2d30"/></svg>
<svg class="i" style="left:153.2px;top:472.1px;" width="11.040000000000001" height="11.040000000000001" viewBox="0 0 12 12"><path d="M1 1H11L6.700 6L11 11H1Z" fill="#2b2537" stroke="#b57ee5" stroke-width="1.5" stroke-linejoin="round"/></svg>
<svg class="i" style="left:140.0px;top:603px;" width="24" height="24" viewBox="0 0 24 24"><g transform="translate(.46,-1.4) scale(.766)"><g fill="none" stroke="#ced0d6" stroke-width="1.950" stroke-linecap="round" stroke-linejoin="round"><path d="M21.2 25.1H18.1C18.1 23.3 16.700 22 14.900 22C13.100 22 12 23.300 12 25.100H9.700C9.700 23.300 8.300 22 6.500 22C4.700 22 3.900 23.300 3.900 25.100H1C.300 21.500 1 17.600 3.300 14.600C4.600 12.900 5.600 11.700 6.200 10.500C7.500 8.600 10 7.800 12.600 7.800C15.600 7.800 18.500 9.300 21.500 10.700C23.500 11.600 25.600 11.700 27.200 10.600C27.900 10.100 28.400 9.500 28.700 8.800"/><path d="M22.7 6.500C23.300 4.900 25.200 3.900 26.900 4.700C29 5.700 29.600 8.600 28.800 11.400C28 14.200 25.900 16.200 23.600 17.800C21.900 19 21.200 20.800 21.200 23V25.100"/><path d="M6.2 10.800C6 13.500 7 17 9.300 17.800C11.300 18.400 13 16.300 14.400 14.600"/></g><rect x="17.700" y="12.900" width="1.900" height="1.900" fill="#ced0d6"/></g><rect x="12" y="11.900" width="13" height="13" fill="#2b2d30"/></svg>
<svg class="i" style="left:153.2px;top:616.1px;" width="11.040000000000001" height="11.040000000000001" viewBox="0 0 12 12"><path d="M1 1H11L6.700 6L11 11H1Z" fill="#2b2537" stroke="#b57ee5" stroke-width="1.5" stroke-linejoin="round"/></svg>
<svg class="i" style="left:140.5px;top:495px;" width="24" height="24" viewBox="0 0 24 24"><path d="M19.00 12.05L18.99 11.71L18.97 11.37L18.93 11.03L19.09 10.66L19.42 10.23L19.75 9.76L20.06 9.26L20.31 8.74L20.35 8.26L20.17 7.87L19.98 7.48L19.77 7.10L19.55 6.73L19.31 6.37L19.05 6.02L18.62 5.82L18.05 5.78L17.46 5.79L16.89 5.85L16.35 5.91L15.95 5.86L15.67 5.66L15.39 5.47L15.10 5.30L14.80 5.13L14.50 4.98L14.18 4.84L13.94 4.52L13.73 4.02L13.49 3.50L13.21 2.99L12.88 2.51L12.49 2.23L12.06 2.19L11.63 2.16L11.20 2.15L10.77 2.16L10.34 2.19L9.91 2.23L9.52 2.51L9.19 2.99L8.91 3.50L8.67 4.02L8.46 4.52L8.22 4.84L7.90 4.98L7.60 5.13L7.30 5.30L7.01 5.47L6.73 5.66L6.45 5.86L6.05 5.91L5.51 5.85L4.94 5.79L4.35 5.78L3.78 5.82L3.35 6.02L3.09 6.37L2.85 6.73L2.63 7.10L2.42 7.48L2.23 7.87L2.05 8.26L2.09 8.74L2.34 9.26L2.65 9.76L2.98 10.23L3.31 10.66L3.47 11.03L3.43 11.37L3.41 11.71L3.40 12.05L3.41 12.39L3.43 12.73L3.47 13.07L3.31 13.44L2.98 13.87L2.65 14.34L2.34 14.84L2.09 15.36L2.05 15.84L2.23 16.23L2.42 16.62L2.63 17.00L2.85 17.37L3.09 17.73L3.35 18.08L3.78 18.28L4.35 18.32L4.94 18.31L5.51 18.25L6.05 18.19L6.45 18.24L6.73 18.44L7.01 18.63L7.30 18.80L7.60 18.97L7.90 19.12L8.22 19.26L8.46 19.58L8.67 20.08L8.91 20.60L9.19 21.11L9.52 21.59L9.91 21.87L10.34 21.91L10.77 21.94L11.20 21.95L11.63 21.94L12.06 21.91L12.49 21.87L12.88 21.59L13.21 21.11L13.49 20.60L13.73 20.08L13.94 19.58L14.18 19.26L14.50 19.12L14.80 18.97L15.10 18.80L15.39 18.63L15.67 18.44L15.95 18.24L16.35 18.19L16.89 18.25L17.46 18.31L18.05 18.32L18.62 18.28L19.05 18.08L19.31 17.73L19.55 17.37L19.77 17.00L19.98 16.62L20.17 16.23L20.35 15.84L20.31 15.36L20.06 14.84L19.75 14.34L19.42 13.87L19.09 13.44L18.93 13.07L18.97 12.73L18.99 12.39Z" fill="none" stroke="#ced0d6" stroke-width="1.500" stroke-linejoin="round"/><circle cx="11.200" cy="12.050" r="3.100" fill="none" stroke="#ced0d6" stroke-width="1.500"/></svg>
<svg class="i" style="left:140.0px;top:531px;" width="24" height="24" viewBox="0 0 24 24"><rect x="1.900" y="3.900" width="19.200" height="16.200" rx="2.600" fill="#43454a" stroke="#ced0d6" stroke-width="1.600"/><path d="M5.200 8.600L9.400 12L5.200 15.400M11 15.900H16.500" fill="none" stroke="#ced0d6" stroke-width="1.800" stroke-linecap="butt" stroke-linejoin="miter"/></svg>
<svg class="i" style="left:139.5px;top:567px;" width="24" height="24" viewBox="0 0 24 24"><path d="M3 4.500H21M3 9.500H15M3 14.500H21M3 19.500H15" stroke="#ced0d6" stroke-width="1.500"/></svg>
<svg class="i" style="left:112px;top:638px;" width="24" height="24" viewBox="0 0 24 24"><g fill="#43454a" stroke="#ced0d6" stroke-width="1.500" stroke-linejoin="round"><rect x="2.800" y="8.600" width="6" height="12.600" rx=".800"/><rect x="8.800" y="4.200" width="6" height="17" rx=".800"/><rect x="14.800" y="10" width="6" height="11.200" rx=".800"/></g></svg>
<svg class="i" style="left:111.3px;top:673.3px;" width="26" height="24" viewBox="0 0 26 24"><path d="M2 6.500H11.500M2 11.500H11.500M2 16.500H20M2 21.500H14" stroke="#ced0d6" stroke-width="1.500"/><circle cx="18.500" cy="7" r="5.200" fill="#548af7"/><path d="M18.500 4V7.200L20.500 9" fill="none" stroke="#2b2d30" stroke-width="1.300"/></svg>
</body></html>
